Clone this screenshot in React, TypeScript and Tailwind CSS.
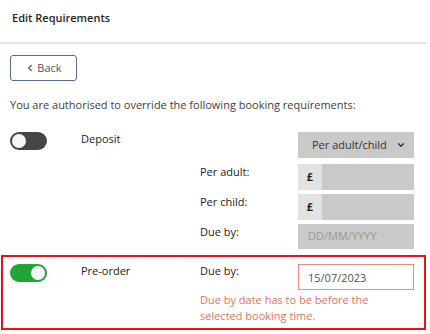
import { useState } from "react";
import { ChevronDown, ChevronLeft } from "lucide-react";

function Toggle({ on, onClick }: { on: boolean; onClick: () => void }) {
  return (
    <button
      type="button"
      onClick={onClick}
      className={
        on
          ? "flex items-center justify-end w-[37px] h-[18px] rounded-full bg-[#22a537] px-[2px]"
          : "flex items-center justify-start w-[37px] h-[18px] rounded-full bg-[#454545] px-[2px]"
      }
    >
      <span className="w-[14px] h-[14px] rounded-full bg-[#f7f7f7]" />
    </button>
  );
}

export default function App() {
  const [deposit, setDeposit] = useState(false);
  const [preorder, setPreorder] = useState(true);
  const [dueDate, setDueDate] = useState("15/07/2023");

  return (
    <div className="w-[427px] min-h-[334px] bg-white text-[11px] text-[#3a3a3a] font-['Open_Sans',sans-serif]">
      {/* Header */}
      <div className="h-[44px] w-[426px] border-b-2 border-[#e4e4e4] pl-[12px] pt-[10px]">
        <h1 className="text-[11px] leading-[16px] font-semibold text-[#1f1f1f]">Edit Requirements</h1>
      </div>

      <div className="pl-[10px] pt-[11px]">
        <button
          type="button"
          className="flex items-center justify-center gap-[2px] w-[67px] h-[26px] border border-[#5a6894] rounded-[3px] text-[#555]"
        >
          <ChevronLeft size={10} strokeWidth={3} />
          <span>Back</span>
        </button>

        <p className="mt-[17px] leading-[14px] text-[#3d3d3d]">
          You are authorised to override the following booking requirements:
        </p>

        {/* Deposit */}
        <div className="mt-[20px] grid grid-cols-[71px_119px_98px_116px] gap-y-[4px]">
          <Toggle on={deposit} onClick={() => setDeposit(!deposit)} />
          <span className="leading-[14px] font-medium text-[#222]">Deposit</span>
          <span />
          <div className="mb-[2px] flex items-center h-[26px] bg-[#c9c9c9] pl-[14px] pr-[8px] text-[#333]">
            <span className="flex-1">Per adult/child</span>
            <ChevronDown size={10} strokeWidth={3} />
          </div>

          <span />
          <span />
          <span className="pt-[1px] leading-[14px] font-medium text-[#222]">Per adult:</span>
          <div className="flex h-[26px] bg-[#c9c9c9]">
            <span className="flex items-center justify-center w-[24px] bg-[#e2e2e2] font-bold text-[#222]">£</span>
          </div>

          <span />
          <span />
          <span className="pt-[1px] leading-[14px] font-medium text-[#222]">Per child:</span>
          <div className="flex h-[26px] bg-[#c9c9c9]">
            <span className="flex items-center justify-center w-[24px] bg-[#e2e2e2] font-bold text-[#222]">£</span>
          </div>

          <span />
          <span />
          <span className="pt-[1px] leading-[14px] font-medium text-[#222]">Due by:</span>
          <div className="flex items-center h-[25px] bg-[#c9c9c9] pl-[10px] text-[#9a9a9a]">DD/MM/YYYY</div>
        </div>
      </div>

      {/* Pre-order */}
      <div className="mt-[6px] ml-[1px] w-[425px] border-2 border-[#e3141c] pl-[7px] pt-[7px] pb-[4px]">
        <div className="grid grid-cols-[71px_119px_98px_116px]">
          <Toggle on={preorder} onClick={() => setPreorder(!preorder)} />
          <span className="leading-[14px] font-medium text-[#222]">Pre-order</span>
          <span className="leading-[14px] font-medium text-[#222]">Due by:</span>
          <input
            value={dueDate}
            onChange={(e) => setDueDate(e.target.value)}
            className="h-[26px] w-[116px] border border-[#ee8a79] pl-[9px] text-[#555] outline-none"
          />
        </div>
        <p className="ml-[190px] mt-[2px] w-[200px] leading-[16px] text-[#e9735f]">
          Due by date has to be before the selected booking time.
        </p>
      </div>
    </div>
  );
}
